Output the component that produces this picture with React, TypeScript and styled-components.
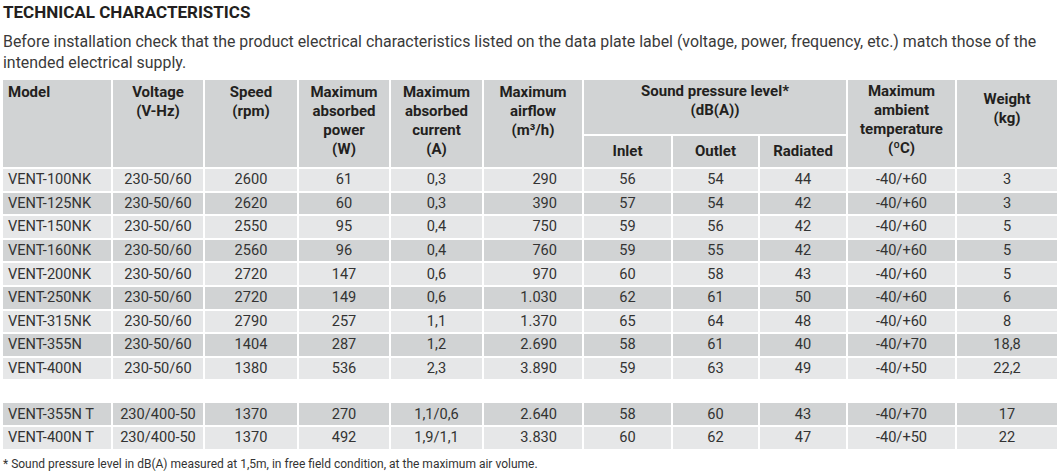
import React from "react";
import styled, { createGlobalStyle } from "styled-components";

const Global = createGlobalStyle`
  html, body { margin: 0; padding: 0; background: #ffffff; }
  body { font-family: Roboto, "Liberation Sans", sans-serif; color: #333333; }
`;

const Page = styled.div`
  width: 1060px;
  box-sizing: border-box;
`;

const Title = styled.h2`
  margin: 0;
  padding-left: 3px;
  font-size: 17px;
  line-height: 24px;
  font-weight: 700;
  color: #231f20;
`;

const Intro = styled.p`
  margin: 7px 0 5px 0;
  padding-left: 3px;
  font-size: 15.9px;
  line-height: 21px;
  color: #3a3a3a;
`;

const Table = styled.table`
  margin-left: 1px;
  width: 1058px;
  table-layout: fixed;
  border-collapse: separate;
  border-spacing: 2px;
  font-size: 14.6px;
`;

const Head = styled.th<{ $align?: "left" | "center"; $padTop?: number; $middle?: boolean }>`
  background: #d1d3d4;
  color: #231f20;
  font-weight: 700;
  font-size: 15px;
  line-height: 19px;
  text-align: ${(p) => p.$align ?? "center"};
  vertical-align: ${(p) => (p.$middle ? "middle" : "top")};
  padding: ${(p) => p.$padTop ?? 3}px 2px 0 ${(p) => (p.$align === "left" ? 5 : 2)}px;
  box-sizing: border-box;
`;

const GroupRow = styled.tr`
  height: 54px;
`;

const SubRow = styled.tr`
  height: 31px;
`;

const DataRow = styled.tr<{ $dark?: boolean }>`
  height: 21.6px;
  background: ${(p) => (p.$dark ? "#d1d3d4" : "#e6e7e8")};
`;

const Cell = styled.td<{ $align?: "left" | "center" | "right" }>`
  padding: 0 ${(p) => (p.$align === "right" ? 25 : 0)}px 0 ${(p) => (p.$align === "left" ? 5 : 0)}px;
  text-align: ${(p) => p.$align ?? "center"};
  vertical-align: middle;
  line-height: 21px;
  color: #333333;
  white-space: nowrap;
`;

const SpacerRow = styled.tr`
  height: 20px;
`;

const Note = styled.p`
  margin: 5px 0 0 0;
  padding-left: 3px;
  font-size: 12px;
  line-height: 16px;
  color: #333333;
`;

type Row = string[];

const groupA: Row[] = [
  ["VENT-100NK", "230-50/60", "2600", "61", "0,3", "290", "56", "54", "44", "-40/+60", "3"],
  ["VENT-125NK", "230-50/60", "2620", "60", "0,3", "390", "57", "54", "42", "-40/+60", "3"],
  ["VENT-150NK", "230-50/60", "2550", "95", "0,4", "750", "59", "56", "42", "-40/+60", "5"],
  ["VENT-160NK", "230-50/60", "2560", "96", "0,4", "760", "59", "55", "42", "-40/+60", "5"],
  ["VENT-200NK", "230-50/60", "2720", "147", "0,6", "970", "60", "58", "43", "-40/+60", "5"],
  ["VENT-250NK", "230-50/60", "2720", "149", "0,6", "1.030", "62", "61", "50", "-40/+60", "6"],
  ["VENT-315NK", "230-50/60", "2790", "257", "1,1", "1.370", "65", "64", "48", "-40/+60", "8"],
  ["VENT-355N", "230-50/60", "1404", "287", "1,2", "2.690", "58", "61", "40", "-40/+70", "18,8"],
  ["VENT-400N", "230-50/60", "1380", "536", "2,3", "3.890", "59", "63", "49", "-40/+50", "22,2"],
];

const groupB: Row[] = [
  ["VENT-355N T", "230/400-50", "1370", "270", "1,1/0,6", "2.640", "58", "60", "43", "-40/+70", "17"],
  ["VENT-400N T", "230/400-50", "1370", "492", "1,9/1,1", "3.830", "60", "62", "47", "-40/+50", "22"],
];

const widths = [108, 90, 92, 90, 91, 98, 87, 85, 86, 107, 100];

const renderRow = (r: Row, dark: boolean) => (
  <DataRow key={r[0]} $dark={dark}>
    {r.map((v, i) => (
      <Cell key={i} $align={i === 0 ? "left" : i === 5 ? "right" : "center"}>
        {v}
      </Cell>
    ))}
  </DataRow>
);

export default function App() {
  return (
    <Page>
      <Global />
      <Title>TECHNICAL CHARACTERISTICS</Title>
      <Intro>
        Before installation check that the product electrical characteristics listed on the data plate label (voltage,
        power, frequency, etc.) match those of the intended electrical supply.
      </Intro>
      <Table>
        <colgroup>
          {widths.map((w, i) => (
            <col key={i} style={{ width: w }} />
          ))}
        </colgroup>
        <thead>
          <GroupRow>
            <Head rowSpan={2} $align="left">Model</Head>
            <Head rowSpan={2}>Voltage<br />(V-Hz)</Head>
            <Head rowSpan={2}>Speed<br />(rpm)</Head>
            <Head rowSpan={2}>Maximum<br />absorbed<br />power<br />(W)</Head>
            <Head rowSpan={2}>Maximum<br />absorbed<br />current<br />(A)</Head>
            <Head rowSpan={2}>Maximum<br />airflow<br />(m³/h)</Head>
            <Head colSpan={3} $padTop={2}>Sound pressure level*<br />(dB(A))</Head>
            <Head rowSpan={2} $padTop={2}>Maximum<br />ambient<br />temperature<br />(ºC)</Head>
            <Head rowSpan={2} $padTop={10}>Weight<br />(kg)</Head>
          </GroupRow>
          <SubRow>
            <Head $middle $padTop={0}>Inlet</Head>
            <Head $middle $padTop={0}>Outlet</Head>
            <Head $middle $padTop={0}>Radiated</Head>
          </SubRow>
        </thead>
        <tbody>
          {groupA.map((r, i) => renderRow(r, i % 2 === 1))}
          <SpacerRow>
            <td colSpan={11} />
          </SpacerRow>
          {groupB.map((r, i) => renderRow(r, i % 2 === 0))}
        </tbody>
      </Table>
      <Note>* Sound pressure level in dB(A) measured at 1,5m, in free field condition, at the maximum air volume.</Note>
    </Page>
  );
}
